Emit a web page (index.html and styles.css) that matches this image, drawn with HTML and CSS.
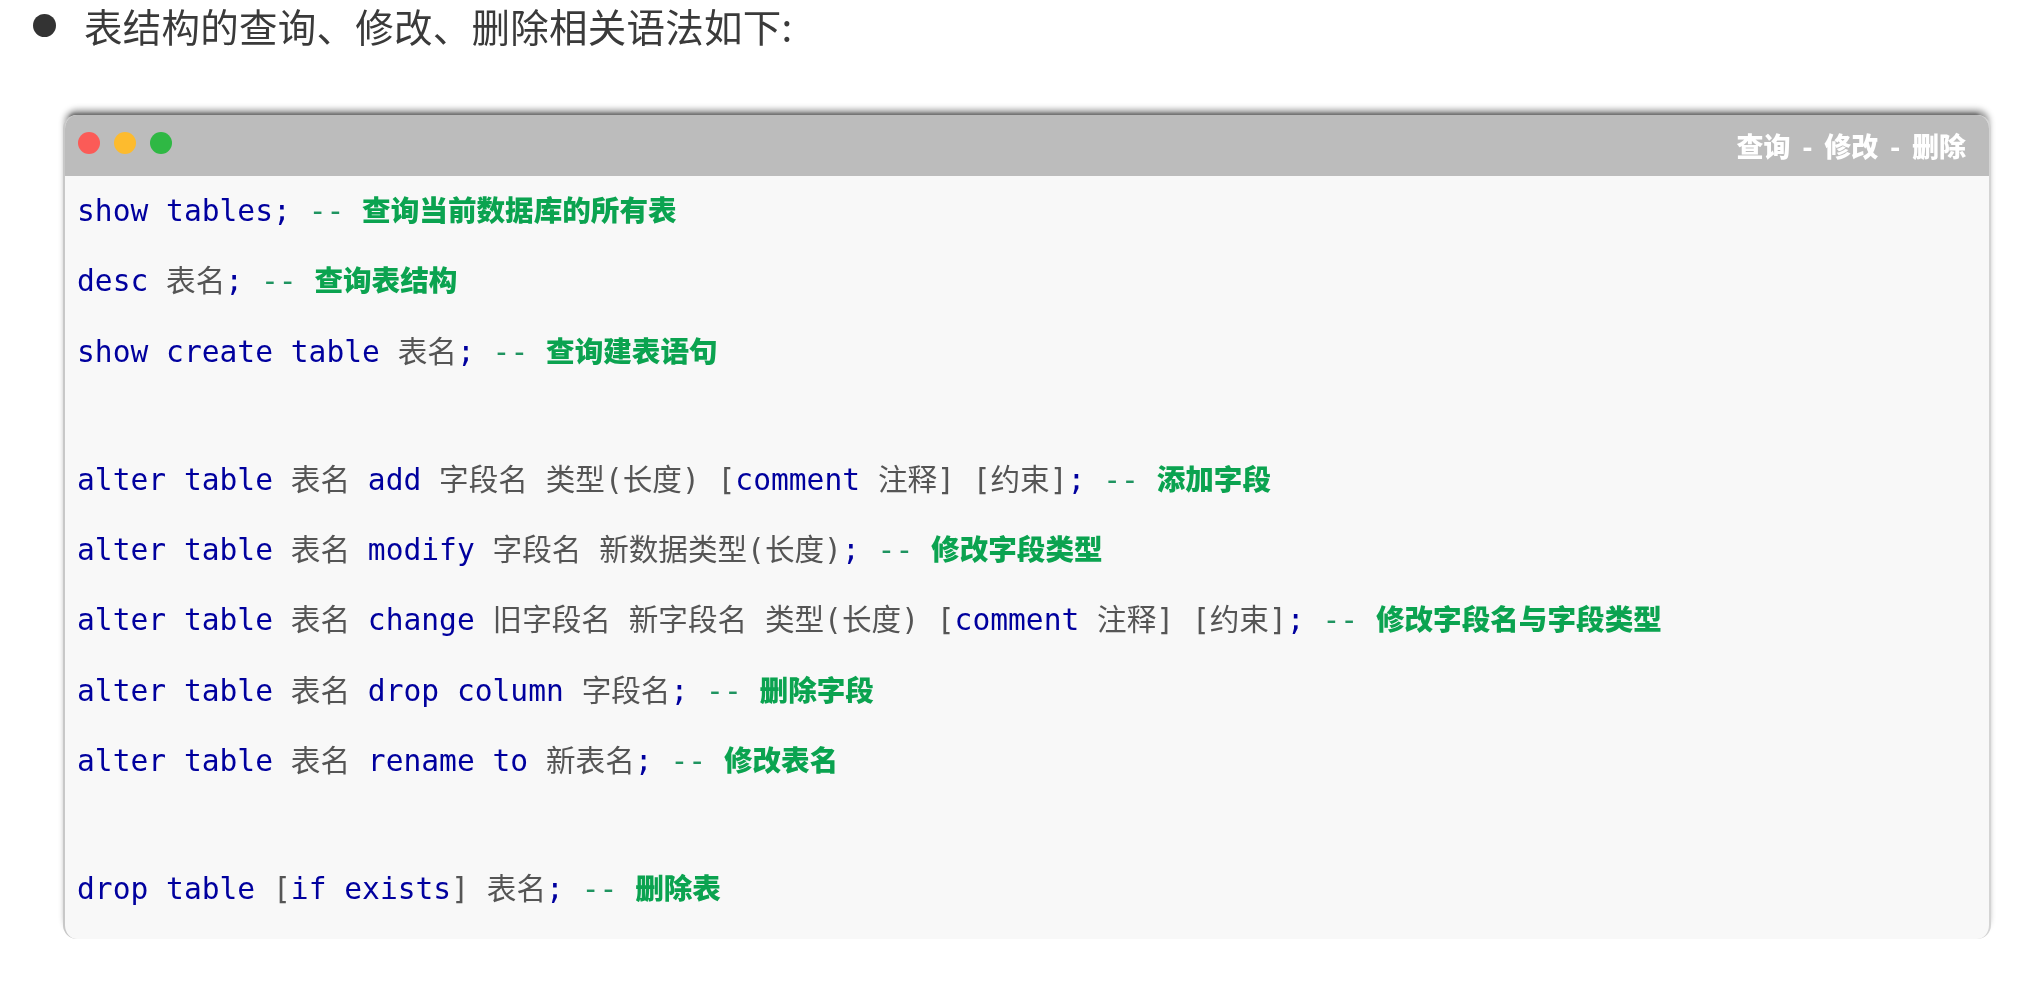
FILE: index.html
```html
<!DOCTYPE html>
<html lang="zh">
<head>
<meta charset="utf-8">
<title>表结构语法</title>
<link rel="stylesheet" href="styles.css">
</head>
<body>
<div class="page">
  <div class="heading"><span class="bullet"></span><span>表结构的查询、修改、删除相关语法如下:</span></div>
  <div class="window">
    <div class="titlebar">
      <div class="lights"><span class="dot red"></span><span class="dot yellow"></span><span class="dot green"></span></div>
      <div class="wintitle">查询 - 修改 - 删除</div>
    </div>
    <div class="code">
      <div class="line"><b>show tables;</b> <i>--</i> <em>查询当前数据库的所有表</em></div>
      <div class="line"><b>desc</b> 表名<b>;</b> <i>--</i> <em>查询表结构</em></div>
      <div class="line"><b>show create table</b> 表名<b>;</b> <i>--</i> <em>查询建表语句</em></div>
      <div class="blank"></div>
      <div class="line"><b>alter table</b> 表名 <b>add</b> 字段名 类型(长度) [<b>comment</b> 注释] [约束]<b>;</b> <i>--</i> <em>添加字段</em></div>
      <div class="line"><b>alter table</b> 表名 <b>modify</b> 字段名 新数据类型(长度)<b>;</b> <i>--</i> <em>修改字段类型</em></div>
      <div class="line"><b>alter table</b> 表名 <b>change</b> 旧字段名 新字段名 类型(长度) [<b>comment</b> 注释] [约束]<b>;</b> <i>--</i> <em>修改字段名与字段类型</em></div>
      <div class="line"><b>alter table</b> 表名 <b>drop column</b> 字段名<b>;</b> <i>--</i> <em>删除字段</em></div>
      <div class="line"><b>alter table</b> 表名 <b>rename to</b> 新表名<b>;</b> <i>--</i> <em>修改表名</em></div>
      <div class="blank"></div>
      <div class="line"><b>drop table</b> [<b>if exists</b>] 表名<b>;</b> <i>--</i> <em>删除表</em></div>
    </div>
  </div>
</div>
</body>
</html>
```

FILE: styles.css
```css
html, body {
  margin: 0;
  height: 100%;
  background: #fff;
  overflow: hidden;
}
.page {
  padding: 0 35px 0 33px;
  filter: blur(0.6px);
}
.heading {
  display: flex;
  align-items: center;
  gap: 28px;
  height: 50px;
  font-family: "Noto Sans CJK SC", sans-serif;
  font-size: 38.5px;
  letter-spacing: 0.25px;
  color: #3a3a3a;
}
.bullet {
  width: 23px;
  height: 23px;
  border-radius: 50%;
  background: #333;
}
.window {
  margin: 65px 0 0 30px;
  border-radius: 14px;
  background: #f8f8f8;
  box-shadow: 0 -7px 6px -2px rgba(0, 0, 0, 0.42), -2px -10px 3px -8px rgba(0, 0, 0, 0.3);
  overflow: hidden;
  border-left: 2px solid #c8c8c8;
  border-right: 2px solid #d4d4d4;
}
.titlebar {
  display: flex;
  justify-content: space-between;
  height: 61px;
  padding: 0 23px 0 13px;
  background: #bcbcbc;
}
.lights {
  display: flex;
  gap: 14px;
  padding-top: 17px;
}
.dot {
  width: 22px;
  height: 22px;
  border-radius: 50%;
}
.red { background: #fb5b57; }
.yellow { background: #fdbb2e; }
.green { background: #2fb844; }
.wintitle {
  padding-top: 11px;
  font-family: "Noto Sans CJK SC", sans-serif;
  font-size: 27px;
  font-weight: 900;
  word-spacing: 5.5px;
  line-height: 40px;
  color: #fff;
}
.code {
  padding: 0 12px 14px;
  font-family: "DejaVu Sans Mono", "Noto Sans CJK SC", monospace;
  font-size: 29.6px;
  color: #555;
}
.line {
  height: 70.3px;
  line-height: 65px;
  white-space: pre;
}
.blank { height: 58px; }
.line b {
  font-weight: 400;
  color: #00009e;
}
.line i {
  font-style: normal;
  color: #1f9460;
}
.line em {
  font-family: "Noto Sans CJK SC", sans-serif;
  font-style: normal;
  font-size: 28.6px;
  font-weight: 900;
  color: #0ba350;
}
```
